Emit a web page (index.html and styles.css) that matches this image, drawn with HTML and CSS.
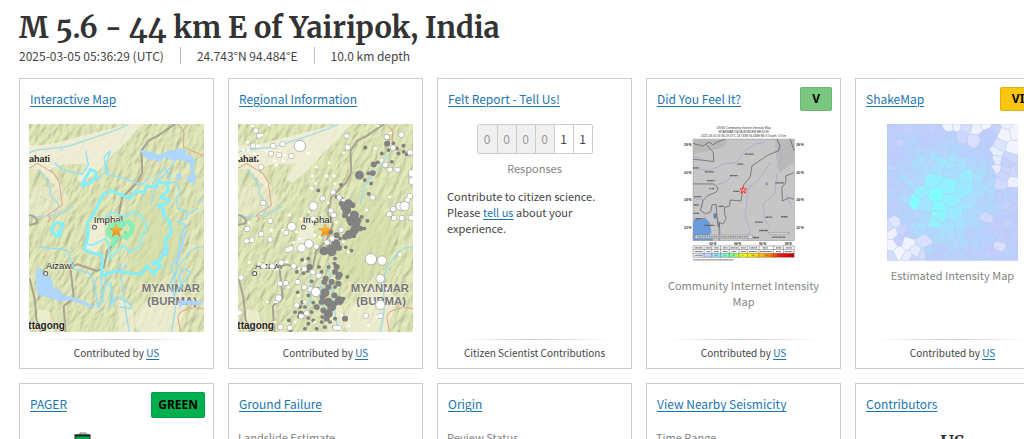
FILE: index.html
```html
<!DOCTYPE html>
<html lang="en">
<head>
<meta charset="utf-8">
<title>M 5.6 - 44 km E of Yairipok, India</title>
<link rel="stylesheet" href="styles.css">
</head>
<body>
<svg class="defs" aria-hidden="true">
  <defs>
    <filter id="relief" x="0" y="0" width="100%" height="100%">
      <feTurbulence type="fractalNoise" baseFrequency="0.07 0.025" numOctaves="4" seed="8" result="n"/>
      <feDiffuseLighting in="n" surfaceScale="6" diffuseConstant="1.15" lighting-color="#dde2b6">
        <feDistantLight azimuth="200" elevation="60"/>
      </feDiffuseLighting>
    </filter>
    <symbol id="terrain" viewBox="30 27 524 624">
      <rect x="30" y="27" width="524" height="624" fill="#dbe2b3"/>
      <g transform="rotate(24 290 340)"><rect x="-130" y="-100" width="840" height="900" filter="url(#relief)" opacity=".65"/></g>
      <g fill="#f2efd9">
        <path opacity=".85" d="M30 90C90 95 140 75 200 60L330 27H372L300 100 240 165 190 205 175 190 205 145 120 150 90 165 130 215 120 225 60 160 30 165Z"/>
        <path opacity=".85" d="M218 325l35-22 5 60-28 50-30-8z"/>
        <path opacity=".7" d="M395 545c30-30 60-40 85-30l25 40-30 96H360c-30-40-5-80 35-106zM300 545l40 30 5 76h-45zM55 580l35 8 20 63H55z"/>
        <path opacity=".4" d="M30 215h100l25 50-60 40-65 5z"/>
      </g>
      <path d="M325 300c40-60 60-60 90-80 40 30 50 90 90 120l-25 110-80 60-70-20z" fill="#d3dfa7" opacity=".55"/>
      <g fill="none" stroke-linejoin="round">
        <path stroke="#9fdceb" stroke-width="4" d="M30 112C70 95 120 105 165 88S250 62 328 30M60 165l30 40 5 35 25 30-15 30-75 8M118 300l45-28M554 395c-50 0-60 40-75 60s-15 60-10 120l-12 76M245 480l5 70-15 30M275 500l10 75M300 440l20 150 10 60M395 270l15-60 40-50 35-45"/>
        <path stroke="#e3a489" stroke-width="3" d="M30 160l25-15 50 30 15 25 10 70-45 30 10 10-8 10M475 27l18 20v50l60 25M554 580c-50-10-80 10-78 30l8 41"/>
        <path stroke="#9c958a" stroke-width="6" opacity=".8" d="M467 27l-50 35-30 15-20 30 2 65-15 30-45 45-10 50 15 30-20 50-30 30-10 50-20 10-60-20-20 10 10 90-30 25 5 78M30 300c20 0 28 20 22 24l-22 6M32 490l15 60 5 60 14 41"/>
      </g>
      <g font-family="Liberation Sans, sans-serif" stroke="#f3f1df" stroke-width="3" paint-order="stroke" fill="#222">
        <text x="30" y="140" font-size="27" font-weight="bold">ahati</text>
        <text x="224" y="323" font-size="29">Imphal</text>
        <text x="81" y="461" font-size="28">Aizawl</text>
        <text x="28" y="640" font-size="30" font-weight="bold">ttagong</text>
        <text x="368" y="530" font-size="34" font-weight="bold" fill="#777">MYANMAR</text>
        <text x="384" y="568" font-size="34" font-weight="bold" fill="#777">(BURMA)</text>
      </g>
      <g fill="#fff" stroke="#555" stroke-width="3"><circle cx="226" cy="336" r="6"/><circle cx="80" cy="475" r="6"/></g>
    </symbol>
    <linearGradient id="gold" x2="0" y2="1"><stop stop-color="#ffd23c"/><stop offset="1" stop-color="#f47d12"/></linearGradient>
    <symbol id="star" viewBox="0 0 42 42" overflow="visible">
      <path d="M21 1l5 14 15 0-12 10 5 15-13-9-13 9 5-15L1 15l15 0z" fill="url(#gold)" stroke="#e49531" stroke-width="1.5"/>
    </symbol>
  </defs>
</svg>

<main class="page">
  <header class="event">
    <h1 class="event-title">M 5.6 - 44 km E of Yairipok, India</h1>
    <ul class="event-meta">
      <li>2025-03-05 05:36:29 (UTC)</li>
      <li>24.743°N 94.484°E</li>
      <li>10.0 km depth</li>
    </ul>
  </header>

  <section class="cards">
    <article class="card">
      <header class="card-head"><a href="#map">Interactive Map</a></header>
      <div class="card-body">
        <svg class="map" viewBox="30 27 524 624" role="img" aria-label="Interactive map">
          <use href="#terrain" x="30" y="27" width="524" height="624"/>
          <g fill="none" stroke="#82effa" stroke-linejoin="round" stroke-linecap="round">
            <path stroke-width="9" d="M245 250l-22 48-18 25 3 32-12 48 28 12 25 5-2 62 45-15 28 5 45 5 20-25 18 25 22-28-25-5 22-10 20-30-5-30 18-18-3-35-22-25 5-12-20-12 25-5 10-12-25-8 22-20-5-22-25-5-5 15-30-2-8 20-25-5-15 22-20-8-35-15-25 10z"/>
            <path stroke-width="9" d="M214 163l-14 25-12 24 28-10 15-18-2-15zM97 345l10-22 25 3-5 18-15 20zM117 348l8 14"/>
            <path stroke-width="5" d="M205 345l-5 40 20 5 40-20 8 20 5 40 25-30 20-8 15 20 30-20 5-30 15-25-20-40-20-8-25 15-40-12-20 15"/>
            <path stroke="#8fe0fa" stroke-width="4" d="M200 110l8 40-20 28-58-15-25-20M232 195l28-25-5-45 18-17-12 40 5 30 50 12 50 20 20-20M400 205l35-48 18 28-8 20 25-5 15 30-15 20 5 30 30 10-5 20-25 10 25 10-18 30-5 60-20 30 5 25M60 395l45 5 40 5 18 55 50 15 15 40 8 60 15-18 5-40 5-50M262 500l15 20-5 50 20-25 40 20 5 15-35-5M470 470l-18 40 12 30 15-20 35-50-20-10-15 20 10 40M535 255l15 5M510 295l25-15M432 400l-5 15 15 5 5-15zM125 104h5M65 245h5M432 467h2"/>
            <path stroke="#aad5fb" stroke-width="6" d="M500 350l-30 100M320 450l-18 20"/>
          </g>
          <path d="M360 103l40 8 18 8 30-12 35-8 20 8-5 10 20 5 10 15-5 25 8 20-5 25-20-5-5-15 15-10-5-30-30-15-20 5-25-10-15 15-10-10-22 5-20-20zM470 178l15-5 3 18-14 4zM55 455l12 5 5 20 25 5 8 35 20 5 5 15 35 5 63 28-3 6-75-25-25 5-45-15-25-5-5-55zM478 555l75 3-8 12-50-3-15 12z" fill="#acd6ff" opacity=".95"/>
          <path d="M260 345l10-20 30-8 30-5 18 15-5 28-20 20-22-8-12 20-5 12-12-8 5-15-15-15z" fill="#82f0b7" opacity=".9"/>
          <path d="M300 345l25-18 8 15-10 15-18 5z" fill="#d4e4b0"/><path d="M313 350l8-4 5 10-10 2z" fill="#73e79c"/>
          <use href="#star" x="270" y="325" width="42" height="42"/>
        </svg>
      </div>
      <footer class="card-foot">Contributed by <a href="#us">US</a></footer>
    </article>

    <article class="card">
      <header class="card-head"><a href="#regional">Regional Information</a></header>
      <div class="card-body">
        <svg class="map" viewBox="30 27 524 624" role="img" aria-label="Regional seismicity map">
          <use href="#terrain" x="30" y="27" width="524" height="624"/>
          <g fill="none" stroke="#828282" stroke-linecap="round">
            <path stroke-width="26" d="M393 180h1M360 265h1M355 285h1M378 300h1M370 320h1M378 345h1M382 325h1M362 358h1M318 395h1M310 410h1M322 385h1M333 556h1M310 575h1M290 532h1M300 595h1M287 407h1M350 275h1M300 560h1"/>
            <path stroke-width="17" d="M436 148h1M433 174h1M476 86h1M340 265h1M372 270h1M350 300h1M362 312h1M390 315h1M395 340h1M350 365h1M375 360h1M332 398h1M302 404h1M325 455h1M334 479h1M330 485h1M330 505h1M310 500h1M350 610h1M244 455h1M288 500h1M318 540h1M283 545h1M285 585h1M295 610h1M265 575h1M218 595h1M318 565h1M325 360h1M305 350h1M280 560h1M320 470h1M292 490h1M300 515h1"/>
            <path stroke-width="11" d="M270 226h1M338 209h1M411 98h1M525 92h1M526 110h1M460 115h1M490 140h1M510 115h1M495 85h1M409 195h1M421 236h1M428 205h1M369 406h1M352 396h1M400 305h1M417 317h1M408 340h1M325 245h1M340 250h1M320 430h1M318 445h1M357 485h1M301 455h1M272 455h1M240 430h1M222 434h1M206 470h1M226 474h1M238 467h1M280 470h1M208 531h1M225 515h1M240 540h1M222 560h1M230 575h1M200 590h1M212 604h1M240 608h1M250 590h1M255 615h1M282 605h1M182 615h1M187 645h1M230 640h1M265 640h1M290 635h1M320 610h1M318 635h1M255 562h1M250 498h1M268 520h1M320 515h1M345 550h1M535 118h1M480 105h1M420 175h1M448 142h1M300 390h1M215 575h1M335 370h1M505 100h1M280 620h1M240 625h1M305 620h1"/>
          </g>
          <g fill="none" stroke-linecap="round">
            <path stroke="#aaa" stroke-width="17" d="M83 47h1M93 63h1M75 92h1M135 93h1M163 87h1M128 116h1M152 120h1M189 123h1M99 156h1M105 264h1M126 317h1M99 357h1M57 342h1M55 378h1M71 374h1M126 373h1M173 353h1M355 63h1M358 97h1M475 66h1M519 59h1M494 98h1M471 149h1M484 164h1M507 164h1M433 247h1M333 247h1M314 231h1M283 250h1M308 286h1M316 300h1M255 310h1M339 344h1M311 370h1M296 382h1M264 394h1M187 400h1M178 404h1M159 442h1M106 453h1M132 453h1M39 487h1M155 505h1M173 503h1M208 500h1M196 453h1M228 461h1M253 471h1M271 481h1M228 516h1M246 522h1M148 555h1M205 570h1M235 594h1M219 603h1M34 592h1M185 637h1M157 635h1M412 601h1M456 602h1M483 297h1M494 282h1M514 273h1M537 255h1M544 243h1M547 308h1M520 309h1M497 309h1M321 637h1M332 638h1M545 112h1"/>
            <path stroke="#fff" stroke-width="14" d="M83 47h1M93 63h1M75 92h1M135 93h1M163 87h1M128 116h1M152 120h1M189 123h1M99 156h1M105 264h1M126 317h1M99 357h1M57 342h1M55 378h1M71 374h1M126 373h1M173 353h1M355 63h1M358 97h1M475 66h1M519 59h1M494 98h1M471 149h1M484 164h1M507 164h1M433 247h1M333 247h1M314 231h1M283 250h1M308 286h1M316 300h1M255 310h1M339 344h1M311 370h1M296 382h1M264 394h1M187 400h1M178 404h1M159 442h1M106 453h1M132 453h1M39 487h1M155 505h1M173 503h1M208 500h1M196 453h1M228 461h1M253 471h1M271 481h1M228 516h1M246 522h1M148 555h1M205 570h1M235 594h1M219 603h1M34 592h1M185 637h1M157 635h1M412 601h1M456 602h1M483 297h1M494 282h1M514 273h1M537 255h1M544 243h1M547 308h1M520 309h1M497 309h1M321 637h1M332 638h1M545 112h1"/>
            <path stroke="#fff" stroke-width="8" d="M74 33h1M124 30h1M58 82h1M60 105h1M88 93h1M101 60h1M115 108h1M170 120h1M33 130h1M46 106h1M140 138h1M165 137h1M145 151h1M240 115h1M264 156h1M303 143h1M252 183h1M262 205h1M250 220h1M296 183h1M318 183h1M319 206h1M346 113h1M441 100h1M448 33h1M486 54h1M460 136h1M130 345h1M163 345h1M62 322h1M184 300h1M218 312h1M242 290h1M215 370h1M205 350h1M259 360h1M276 365h1M196 382h1M230 440h1M175 440h1M212 460h1M64 442h1M92 447h1M148 462h1M117 560h1M143 560h1M180 515h1M210 540h1M228 560h1M200 620h1M140 620h1M260 620h1M340 600h1M362 632h1M420 630h1M435 560h1M445 605h1M466 575h1M430 525h1M475 520h1M514 418h1M360 410h1M345 380h1M415 285h1M540 270h1M484 245h1M300 263h1M345 255h1M324 322h1M90 130h1M78 115h1"/>
          </g>
          <g fill="#fff" stroke="#999" stroke-width="2"><circle cx="215" cy="93" r="17"/><circle cx="256" cy="273" r="13"/><circle cx="191" cy="334" r="13"/><circle cx="220" cy="398" r="13"/><circle cx="242" cy="386" r="13"/><circle cx="263" cy="530" r="14"/><circle cx="428" cy="432" r="17"/><circle cx="461" cy="436" r="14"/><circle cx="456" cy="490" r="13"/><circle cx="456" cy="569" r="14"/><circle cx="515" cy="273" r="12"/><circle cx="529" cy="273" r="14"/><circle cx="552" cy="175" r="12"/><circle cx="553" cy="198" r="12"/><circle cx="151" cy="548" r="10"/></g>
          <use href="#star" x="270" y="325" width="42" height="42"/>
        </svg>
      </div>
      <footer class="card-foot">Contributed by <a href="#us">US</a></footer>
    </article>

    <article class="card">
      <header class="card-head"><a href="#tellus">Felt Report - Tell Us!</a></header>
      <div class="card-body">
        <ol class="counter"><li class="pad">0</li><li class="pad">0</li><li class="pad">0</li><li class="pad">0</li><li>1</li><li>1</li></ol>
        <p class="caption">Responses</p>
        <p class="blurb">Contribute to citizen science. Please <a href="#tellus">tell us</a> about your experience.</p>
      </div>
      <footer class="card-foot">Citizen Scientist Contributions</footer>
    </article>

    <article class="card">
      <header class="card-head"><a href="#dyfi">Did You Feel It?</a><span class="badge mmi-v">V</span></header>
      <div class="card-body">
        <svg class="thumb" viewBox="95 138 392 440" role="img" aria-label="Community Internet Intensity Map">
          <g font-family="Liberation Sans, sans-serif" font-size="9" fill="#333" text-anchor="middle">
            <text x="291" y="153">USGS Community Internet Intensity Map</text>
            <text x="291" y="164">MYANMAR-INDIA BORDER REGION</text>
            <text x="291" y="176" font-size="9">2025-03-05 05:36:29 UTC 24.743N 94.484E M5.6 Depth: 10 km</text>
          </g>
          <rect x="140" y="183" width="302" height="303" fill="#c6c6c6" stroke="#888" stroke-width="1.5"/>
          <path d="M140 183h110l-20 25-90 20zM385 183h57v70l-45 30-10-55z" fill="#b9b9b9"/>
          <path d="M141 485v-50l5-16 12 5 8 3 8-10 15 15 5 30-5 5 10 18z" fill="#6c9bdc" stroke="#6684bb"/>
          <path d="M201 405h9v15h-8zM358 313h4v8h-4z" fill="#587fae"/>
          <g fill="none" stroke="#a9a9d8" stroke-width="2.5"><path d="M140 270l50 8 40-20 40-5 25-35 30-20 30-5M300 375l-5 40 15 35-5 36M370 255l-35 50-30 25-5 45M390 285l-5 60-35 30 5 50 15 20M420 350l15 40M210 320l30-10 20-25M215 420l10 60M140 360l30 5-5 25M140 235l30 8M395 190l10 50-15 30"/></g>
          <g fill="none" stroke="#444" stroke-width="2" opacity=".85"><path d="M140 196l30 8 18-12 12 8 10-7 25-10M140 243l62 7-2-28-20-22M140 317h60l15 12-5 12-25 10-15 15-8 30 15 10 15-5 5-22h12l5 65M442 283l-25 10v20l-12 15 2 40 20-10 15 5M390 183l10 20-5 15-32 13-47 32-5 32-20 25-8 48-32-3-2 18-15 5v18l5 13-10 18-10-5-2 15"/><path d="M430 183l12 35M218 430v56"/></g>
          <path d="M294 228h27M272 258h18M175 281h27M250 292h24M182 307h22M188 331h15M260 339h20M143 355h22M216 384h17M174 441h30M143 405h16M325 431h24M357 416h20M403 415h20M338 456h26M386 314h26M376 476h40M140 269h18M318 477h20M143 380h14M150 421h20" stroke="#555" stroke-width="4" stroke-dasharray="3 1"/>
          <path d="M146 470h172v10H146zM365 462h62v5h-62z" fill="#ddd" stroke="#666" stroke-width="1"/>
          <path d="M152 475h155" stroke="#777" stroke-width="4" stroke-dasharray="5 2"/>
          <path d="M290 325l3 7h7l-6 5 3 8-7-5-7 5 3-8-6-5h7z" fill="#ff9a9a" stroke="#f00" stroke-width="2"/>
          <path d="M265 333h8M190 330h5" stroke="#72d2df" stroke-width="3"/>
          <g font-family="Liberation Sans, sans-serif" font-size="10" font-weight="bold" fill="#333"><text x="113" y="204">28°N</text><text x="113" y="286">26°N</text><text x="113" y="369">24°N</text><text x="113" y="451">22°N</text><text x="448" y="204">28°N</text><text x="448" y="286">26°N</text><text x="448" y="369">24°N</text><text x="448" y="451">22°N</text><text x="188" y="499">92°E</text><text x="262" y="499">94°E</text><text x="337" y="499">96°E</text><text x="414" y="499">98°E</text></g>
          <defs><linearGradient id="scale"><stop stop-color="#fff"/><stop offset=".16" stop-color="#bfccff"/><stop offset=".25" stop-color="#8ef"/><stop offset=".38" stop-color="#7f9"/><stop offset=".5" stop-color="#ff0"/><stop offset=".65" stop-color="#fc0"/><stop offset=".75" stop-color="#f80"/><stop offset=".87" stop-color="#f00"/><stop offset="1" stop-color="#b00"/></linearGradient></defs>
          <rect x="140" y="502" width="302" height="23" fill="#fff"/><rect x="140" y="524" width="302" height="12" fill="url(#scale)"/>
          <path d="M140 502h302v34H140zM140 513h302M140 524h302M173 502v34M196 502v34M222 502v34M248 502v34M277 502v34M302 502v34M337 502v34M380 502v34M410 502v34" fill="none" stroke="#666" stroke-width="1.5"/>
          <path d="M145 508h24M178 508h16M203 508h14M229 508h14M252 508h22M283 508h14M308 508h24M348 508h15M388 508h17M417 508h18M145 519h24M180 519h12M203 519h14M229 519h14M255 519h14M283 519h14M307 519h25M340 519h36M388 519h14M414 519h24M145 530h24M206 530h8M234 530h4M260 530h5M287 530h4M315 530h8M355 530h10M391 530h12" stroke="#666" stroke-width="3" stroke-dasharray="3 1"/>
          <path d="M141 544h120" stroke="#888" stroke-width="4" stroke-dasharray="6 1"/>
        </svg>
        <p class="caption">Community Internet Intensity Map</p>
      </div>
      <footer class="card-foot">Contributed by <a href="#us">US</a></footer>
    </article>

    <article class="card">
      <header class="card-head"><a href="#shakemap">ShakeMap</a><span class="badge mmi-vii">VII</span></header>
      <div class="card-body">
        <svg class="thumb" id="shake" viewBox="105 138 392 408" role="img" aria-label="Estimated Intensity Map"></svg>
        <p class="caption">Estimated Intensity Map</p>
      </div>
      <footer class="card-foot">Contributed by <a href="#us">US</a></footer>
    </article>

    <article class="card">
      <header class="card-head"><a href="#pager">PAGER</a><span class="badge alert-green">GREEN</span></header>
      <div class="card-body">
        <div class="losses">
          <svg class="icon" viewBox="0 0 17 18" role="img" aria-label="Economic losses"><path d="M6 3V1h6v2" fill="none" stroke="#777"/><rect x="1" y="3" width="15" height="14" fill="#00b04f" stroke="#222"/><path d="M1 3.5h15" stroke="#222" stroke-width="2"/></svg>
        </div>
      </div>
    </article>
    <article class="card">
      <header class="card-head"><a href="#ground">Ground Failure</a></header>
      <div class="card-body"><p class="label">Landslide Estimate</p></div>
    </article>
    <article class="card">
      <header class="card-head"><a href="#origin">Origin</a></header>
      <div class="card-body"><p class="label">Review Status</p></div>
    </article>
    <article class="card">
      <header class="card-head"><a href="#nearby">View Nearby Seismicity</a></header>
      <div class="card-body"><p class="label">Time Range</p></div>
    </article>
    <article class="card">
      <header class="card-head"><a href="#contributors">Contributors</a></header>
      <div class="card-body"><p class="agency">US</p></div>
    </article>
  </section>
</main>
<script src="shake.js"></script>
</body>
</html>
```

FILE: styles.css
```css
* { box-sizing: border-box; }

body {
  margin: 0;
  height: 100vh;
  overflow: hidden;
  background: #fff;
  color: #444;
  font: 11px/16px "Source Sans Pro", "Noto Sans CJK SC", "Noto Sans", sans-serif;
}

h1, p, ul, ol { margin: 0; padding: 0; }
ul, ol { list-style: none; }
a { color: #1b75ae; text-underline-offset: 2px; }
svg { display: block; }

.defs { position: absolute; width: 0; height: 0; }

.page { padding: 8px 0 0 19px; }

.event { padding-bottom: 14px; }

.event-title {
  color: #333;
  font: bold 29px/39px Merriweather, "DejaVu Serif Condensed", "DejaVu Serif", serif;
  font-variant-numeric: oldstyle-nums;
  white-space: nowrap;
}

.event-meta { display: flex; font-size: 12px; line-height: 17px; }
.event-meta li + li { margin-left: 16px; padding-left: 16px; border-left: 1px solid #bbb; }

.cards {
  display: grid;
  grid-template-columns: repeat(5, minmax(195px, 1fr));
  gap: 14px;
}

.card {
  display: flex;
  flex-direction: column;
  border: 1px solid #ccc;
}

.card-head {
  display: flex;
  justify-content: space-between;
  align-items: flex-start;
  min-height: 45px;
  padding: 8px 8px 0 10px;
  font-size: 12px;
  line-height: 23px;
}

.badge {
  padding: 0 11px;
  border: 1px solid rgba(0, 0, 0, 0.1);
  border-radius: 2px;
  color: #000;
  font: bold 12px/22px "Noto Sans", sans-serif;
}
.mmi-v { background: #7ac87f; }
.mmi-vii { background: #fac611; }
.alert-green { padding: 1px 6px; background: #00b04f; }

.card-body { flex: 1; padding: 0 9px; }

.map { width: 100%; height: auto; }
.thumb { width: 75%; margin: 0 auto; }

.caption { margin-top: 6px; color: #848484; text-align: center; }
.blurb { margin-top: 12px; }
.label { color: #848484; }

.counter {
  display: flex;
  width: max-content;
  margin: 0 auto;
  border: 1px solid #ccc;
  border-radius: 2px;
  font-size: 12px;
}
.counter li { width: 19px; line-height: 28px; text-align: center; }
.counter li + li { border-left: 1px solid #ccc; }
.counter .pad { background: #f0f0f0; color: #999; }

.card-foot {
  margin-top: 7px;
  padding: 1px 0 2px;
  background: linear-gradient(90deg, transparent 10%, #ccc 50%, transparent 90%) top / 100% 1px no-repeat;
  font-size: 10px;
  line-height: 26px;
  text-align: center;
}

.losses { padding: 3px 0 0 45px; }
.icon { width: 17px; height: 18px; }

.agency {
  color: #333;
  font: bold 18px/26px Merriweather, "DejaVu Serif Condensed", "DejaVu Serif", serif;
  text-align: center;
}
```

FILE: shake.js
```js
// Draws the intensity thumbnail as a Voronoi mosaic around the epicentre.
(function () {
  var box = { x: 105, y: 138, w: 392, h: 408 };
  var state = 77;
  function rnd() { state = (state * 16807) % 2147483647; return state / 2147483647; }

  // x, y, intensity
  var seeds = [
    [250, 350, 4], [289, 323, 3.5], [293, 370, 3.4], [342, 294, 3.1], [338, 334, 3.2],
    [206, 345, 3.3], [190, 370, 3.9], [306, 402, 3.2], [243, 304, 3.4], [262, 388, 3.8],
    [262, 408, 3.6], [248, 436, 3.3], [268, 250, 3], [216, 378, 3], [288, 450, 2.8],
    [402, 415, 1.7], [445, 315, 1.7], [128, 432, 1.5], [120, 465, 1.3], [190, 520, 1.4],
    [215, 490, 1.6], [140, 520, 1.2], [325, 180, 1.8], [367, 188, 1.6], [372, 150, 1.3],
    [455, 165, 1.2], [482, 215, 1.2], [482, 308, 1.3], [440, 505, 1.6]
  ];
  var hand = seeds.length;
  for (var gy = 0; gy < 17; gy++) {
    for (var gx = 0; gx < 16; gx++) {
      var px = box.x + (gx + rnd()) * 24.5, py = box.y + (gy + rnd()) * 24;
      var clear = true;
      for (var k = 0; k < hand; k++) {
        if (Math.hypot(px - seeds[k][0], py - seeds[k][1]) < (k < 9 ? 34 : 22)) clear = false;
      }
      if (!clear) continue;
      var d = Math.hypot(px - 280, (py - 350) * 0.85);
      var v = 3.25 - d / 150 + (rnd() - 0.5) * 0.5;
      if (v < 1.9) v = 1.9 + rnd() * 0.3;
      if (px > 425 && py < 345 || px < 225 && py > 420 && px - py < -300 || py < 160 && px > 270) v = 1.2 + rnd() * 0.7;
      seeds.push([px, py, v]);
    }
  }

  var ramp = [[255, 255, 255], [191, 204, 255], [160, 230, 255], [128, 255, 255]];
  function colour(v) {
    var t = Math.max(0, Math.min(2.999, v - 1)), i = Math.floor(t), f = t - i;
    return 'rgb(' + ramp[i].map(function (c, n) { return Math.round(c + (ramp[i + 1][n] - c) * f); }) + ')';
  }

  // Keeps the part of the polygon that is closer to a than to b.
  function clip(poly, a, b) {
    var nx = b[0] - a[0], ny = b[1] - a[1];
    var c = nx * (a[0] + b[0]) / 2 + ny * (a[1] + b[1]) / 2, out = [];
    poly.forEach(function (p, i) {
      var q = poly[(i + 1) % poly.length];
      var dp = p[0] * nx + p[1] * ny - c, dq = q[0] * nx + q[1] * ny - c;
      if (dp <= 0) out.push(p);
      if (dp * dq < 0) {
        var t = dp / (dp - dq);
        out.push([p[0] + (q[0] - p[0]) * t, p[1] + (q[1] - p[1]) * t]);
      }
    });
    return out;
  }

  var svg = document.getElementById('shake');
  seeds.forEach(function (s) {
    var poly = [[box.x, box.y], [box.x + box.w, box.y], [box.x + box.w, box.y + box.h], [box.x, box.y + box.h]];
    seeds.forEach(function (o) { if (o !== s && poly.length) poly = clip(poly, s, o); });
    var el = document.createElementNS('http://www.w3.org/2000/svg', 'polygon');
    el.setAttribute('points', poly.map(function (p) { return p[0].toFixed(1) + ',' + p[1].toFixed(1); }).join(' '));
    el.setAttribute('fill', colour(s[2]));
    el.setAttribute('stroke', '#b4c4dc');
    el.setAttribute('stroke-width', '2');
    el.setAttribute('stroke-opacity', '0.6');
    svg.appendChild(el);
  });
})();
```
